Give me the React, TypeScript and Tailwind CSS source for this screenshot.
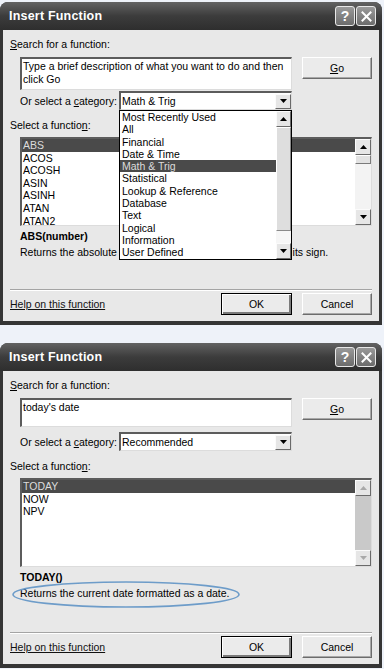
import React from "react";

type Fn = { name: string; selected?: boolean };

const TriUp = ({ color = "#000" }: { color?: string }) => (
  <svg width="7" height="4" viewBox="0 0 7 4">
    <polygon points="3.5,0 7,4 0,4" fill={color} />
  </svg>
);

const TriDown = ({ color = "#000" }: { color?: string }) => (
  <svg width="7" height="4" viewBox="0 0 7 4">
    <polygon points="0,0 7,0 3.5,4" fill={color} />
  </svg>
);

const ArrowBtn = ({ dir, disabled, className = "" }: { dir: "up" | "down"; disabled?: boolean; className?: string }) => (
  <div
    className={`flex items-center justify-center shrink-0 bg-[#e6e6e6] border border-t-[#fbfbfb] border-l-[#fbfbfb] border-r-[#6a6a6a] border-b-[#6a6a6a] ${className}`}
  >
    {dir === "up" ? <TriUp color={disabled ? "#a9a9a9" : "#000"} /> : <TriDown color={disabled ? "#a9a9a9" : "#000"} />}
  </div>
);

const RaisedBtn = ({ children, className = "" }: { children: React.ReactNode; className?: string }) => (
  <div
    className={`h-[22px] flex items-center justify-center bg-[#ebebeb] border border-t-white border-l-white border-r-[#6c6c6c] border-b-[#6c6c6c] shadow-[inset_-1px_-1px_0_#a8a8a8] ${className}`}
  >
    {children}
  </div>
);

const CaptionBtn = ({ children }: { children: React.ReactNode }) => (
  <div className="w-[20px] h-[20px] rounded-[3px] border border-[#e8e8e8] bg-gradient-to-b from-[#9a9a9a] to-[#6c6c6c] flex items-center justify-center text-white font-bold text-[14px] leading-none">
    {children}
  </div>
);

const categories = [
  "Most Recently Used",
  "All",
  "Financial",
  "Date & Time",
  "Math & Trig",
  "Statistical",
  "Lookup & Reference",
  "Database",
  "Text",
  "Logical",
  "Information",
  "User Defined",
];

const CategoryDropdown = () => (
  <div className="absolute left-[-2px] top-[17px] w-[173px] h-[150px] bg-white border border-black flex z-10">
    <div className="flex-1">
      {categories.map((c) => (
        <div
          key={c}
          className={`h-[12.3px] leading-[12.3px] pl-[2px] whitespace-nowrap ${c === "Math & Trig" ? "bg-[#4a4a4a] text-[#dcdcdc]" : ""}`}
        >
          {c}
        </div>
      ))}
    </div>
    <div className="w-[15px] flex flex-col bg-white">
      <ArrowBtn dir="up" className="h-[16px]" />
      <div className="h-[104px] bg-[#dedede] border border-t-white border-l-white border-r-[#8a8a8a] border-b-[#8a8a8a]" />
      <div className="flex-1 bg-[#f6f6f6]" />
      <ArrowBtn dir="down" className="h-[16px]" />
    </div>
  </div>
);

type DialogProps = {
  search: React.ReactNode;
  textH: string;
  category: string;
  open?: boolean;
  fns: Fn[];
  disabledScroll?: boolean;
  sig: string;
  desc: string;
  circled?: boolean;
  className?: string;
};

const Dialog = ({ search, textH, category, open, fns, disabledScroll, sig, desc, circled, className = "" }: DialogProps) => (
  <div className={`w-[382px] rounded-t-[8px] bg-[#353535] flex flex-col ${className}`}>
    {/* Title bar */}
    <div className="h-[28px] shrink-0 rounded-t-[8px] bg-gradient-to-b from-[#636363] via-[#3c3c3c] to-[#2e2e2e] flex items-center pl-[9px] pr-[6px]">
      <span className="text-white font-bold text-[12.5px] tracking-[0.2px]">Insert Function</span>
      <div className="ml-auto flex gap-[1px]">
        <CaptionBtn>?</CaptionBtn>
        <CaptionBtn>
          <svg width="11" height="11" viewBox="0 0 11 11">
            <path d="M1.5 1.5 L9.5 9.5 M9.5 1.5 L1.5 9.5" stroke="#fff" strokeWidth="2" strokeLinecap="square" />
          </svg>
        </CaptionBtn>
      </div>
    </div>

    {/* Body */}
    <div className="flex-1 flex flex-col mx-[3px] mb-[4px] bg-[#e8e8e8] px-[7px] pt-[7px] pb-[6px] text-[10.5px] leading-[14px] text-black">
      <div>
        <span className="underline underline-offset-[1px]">S</span>earch for a function:
      </div>

      <div className="mt-[6px] h-[34px] flex items-start pl-[10px] gap-[10px]">
        <div
          className={`w-[272px] ${textH} bg-white border-t-2 border-l-2 border-t-[#5c5c5c] border-l-[#5c5c5c] border-b border-r border-b-[#dcdcdc] border-r-[#dcdcdc] pl-[1px] pt-[1px] leading-[13px]`}
        >
          {search}
        </div>
        <RaisedBtn className="w-[70px]">
          <span>
            <span className="underline underline-offset-[1px]">G</span>o
          </span>
        </RaisedBtn>
      </div>

      <div className="h-[19px] flex items-center pl-[10px]">
        <span className="w-[99px] whitespace-nowrap">
          Or select a <span className="underline underline-offset-[1px]">c</span>ategory:
        </span>
        <div className="relative w-[173px] h-[19px] bg-white border-t-2 border-l-2 border-t-[#5c5c5c] border-l-[#5c5c5c] border-b border-r border-b-[#dcdcdc] border-r-[#dcdcdc] flex items-center">
          <span className="flex-1 pl-[1px]">{category}</span>
          <ArrowBtn dir="down" className="w-[16px] h-[15px]" />
          {open && <CategoryDropdown />}
        </div>
      </div>

      <div className="mt-[8px]">
        Select a functio<span className="underline underline-offset-[1px]">n</span>:
      </div>

      <div className="mt-[5px] ml-[10px] w-[352px] h-[89px] bg-white border-t-2 border-l-2 border-t-[#5c5c5c] border-l-[#5c5c5c] border-b border-r border-b-[#dcdcdc] border-r-[#dcdcdc] flex">
        <div className="flex-1">
          {fns.map((f) => (
            <div
              key={f.name}
              className={`h-[12.6px] leading-[12.6px] pl-[1px] ${f.selected ? "bg-[#4a4a4a] text-[#dcdcdc]" : ""}`}
            >
              {f.name}
            </div>
          ))}
        </div>
        <div className="w-[16px] flex flex-col">
          <ArrowBtn dir="up" disabled={disabledScroll} className="h-[16px]" />
          {disabledScroll ? (
            <div className="flex-1 bg-[#c9c9c9]" />
          ) : (
            <>
              <div className="h-[9px] bg-[#e2e2e2] border border-t-white border-l-white border-r-[#7a7a7a] border-b-[#7a7a7a]" />
              <div className="flex-1 bg-[#f3f3f3]" />
            </>
          )}
          <ArrowBtn dir="down" disabled={disabledScroll} className="h-[16px]" />
        </div>
      </div>

      <div className="mt-[3px] ml-[10px] font-bold">{sig}</div>
      <div className="mt-[2px] ml-[10px] relative whitespace-nowrap">
        {desc}
        {circled && (
          <svg className="absolute left-[-9px] top-[-6px]" width="230" height="29" viewBox="0 0 230 29">
            <ellipse cx="115" cy="14.5" rx="113" ry="12.5" fill="none" stroke="#6d9cc9" strokeWidth="1.6" />
          </svg>
        )}
      </div>

      <div className="mt-auto h-[2px] border-t border-t-[#a4a4a4] border-b border-b-white" />

      <div className="mt-[2px] h-[22px] flex items-center">
        <span className="underline underline-offset-[1px] text-[#111]">Help on this function</span>
        <div className="ml-auto w-[71px] h-[22px] flex items-center justify-center bg-[#ebebeb] border border-black shadow-[inset_1px_1px_0_#fff,inset_-2px_-2px_0_#7a7a7a]">
          OK
        </div>
        <RaisedBtn className="ml-[10px] w-[70px]">Cancel</RaisedBtn>
      </div>
    </div>
  </div>
);

export default function App() {
  return (
    <div className="h-[669px] overflow-hidden bg-[#eef2f9] pt-[2px] font-['Liberation_Sans',Arial,sans-serif]">
      <Dialog
        className="h-[323px]"
        search={
          <>
            Type a brief description of what you want to do and then
            <br />
            click Go
          </>
        }
        textH="h-[33px]"
        category="Math & Trig"
        open
        fns={[
          { name: "ABS", selected: true },
          { name: "ACOS" },
          { name: "ACOSH" },
          { name: "ASIN" },
          { name: "ASINH" },
          { name: "ATAN" },
          { name: "ATAN2" },
        ]}
        sig="ABS(number)"
        desc="Returns the absolute value of a number, a number without its sign."
      />
      <Dialog
        className="mt-[18px] h-[325px]"
        search="today's date"
        textH="h-[29px]"
        category="Recommended"
        fns={[{ name: "TODAY", selected: true }, { name: "NOW" }, { name: "NPV" }]}
        disabledScroll
        sig="TODAY()"
        desc="Returns the current date formatted as a date."
        circled
      />
    </div>
  );
}
